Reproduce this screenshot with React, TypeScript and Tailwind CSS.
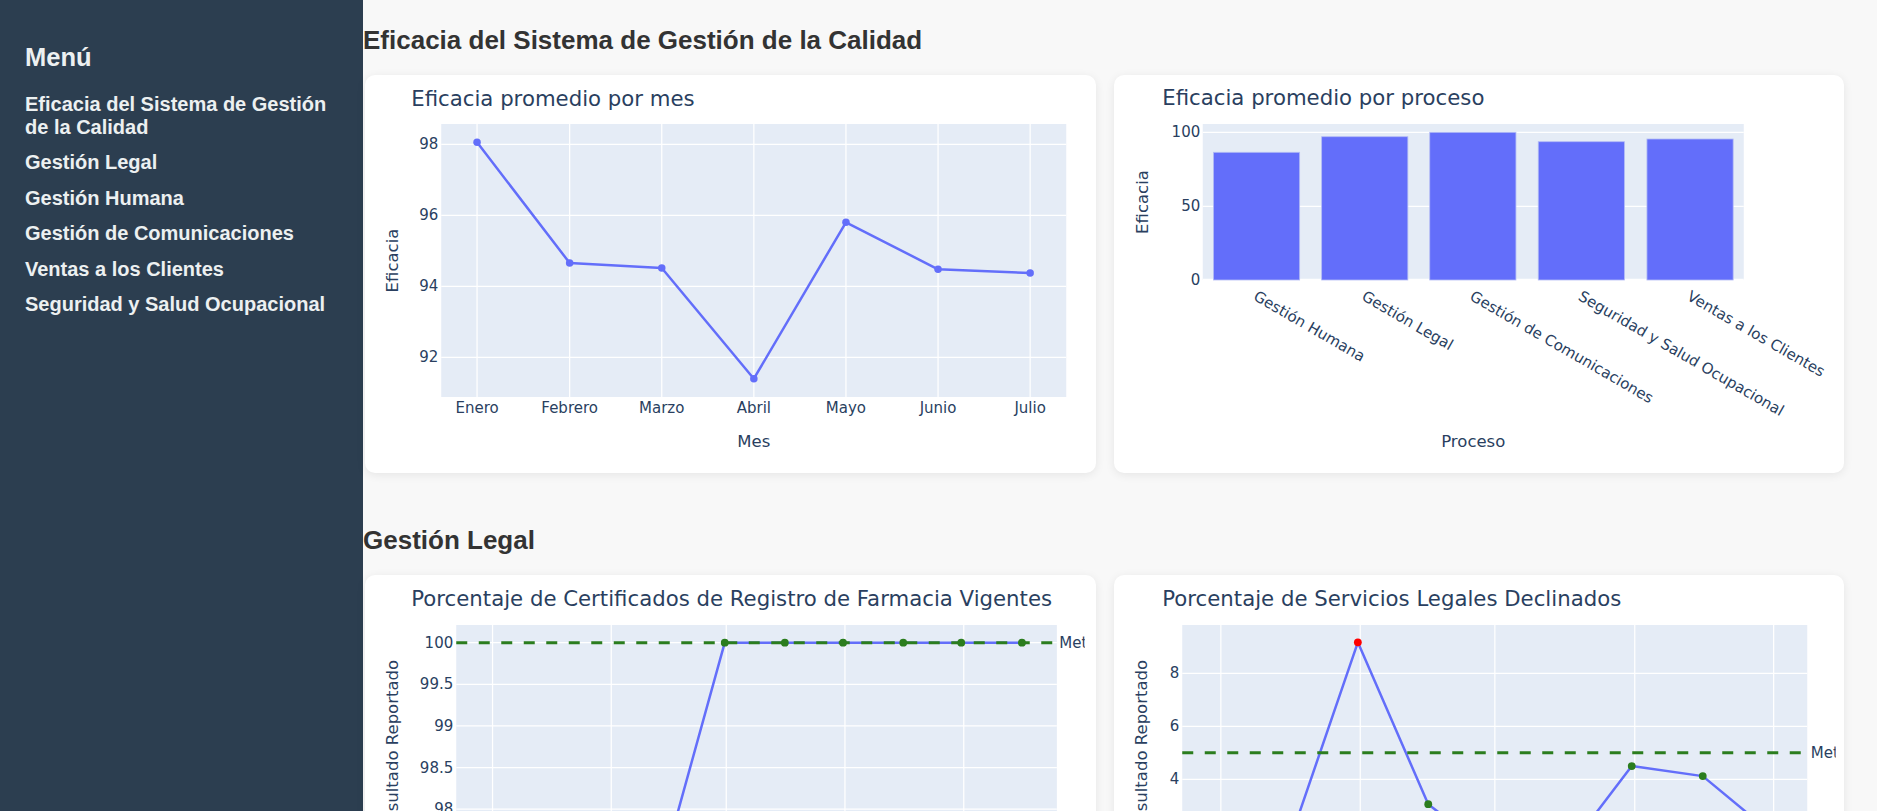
import React from "react";

const F = "'DejaVu Sans', Verdana, sans-serif";
const TXT = "#2a3f5f";
const BLUE = "#636efa";
const GREEN = "#2b7d1e";
const RED = "#ff0000";
const GRID = "#ffffff";
const AX = 16.5;

function Card({ children }: { children: React.ReactNode }) {
  return (
    <div className="bg-white rounded-[10px] shadow-[0_2px_10px_rgba(0,0,0,0.08)] overflow-hidden">
      {children}
    </div>
  );
}

function ChartEficaciaMes() {
  const xs = [111.8, 204.4, 296.5, 388.6, 480.7, 572.8, 664.9];
  const ys = [67.3, 188, 193, 303.7, 147.3, 194.3, 198];
  const months = ["Enero", "Febrero", "Marzo", "Abril", "Mayo", "Junio", "Julio"];
  const grid = [
    { y: 69.3, l: "98" },
    { y: 140.3, l: "96" },
    { y: 211.3, l: "94" },
    { y: 282.3, l: "92" },
  ];
  return (
    <svg viewBox="0 0 730 398" className="block w-full h-[398px]" fontFamily={F}>
      <text x={46} y={31} fontSize={21.25} fill={TXT}>
        Eficacia promedio por mes
      </text>
      <rect x={76} y={49} width={625} height={273} fill="#e5ecf6" />
      {grid.map((g) => (
        <line key={g.l} x1={76} x2={701} y1={g.y} y2={g.y} stroke={GRID} strokeWidth={1.25} />
      ))}
      {xs.map((x) => (
        <line key={x} x1={x} x2={x} y1={49} y2={322} stroke={GRID} strokeWidth={1.25} />
      ))}
      <polyline
        points={xs.map((x, i) => `${x},${ys[i]}`).join(" ")}
        fill="none"
        stroke={BLUE}
        strokeWidth={2.5}
        strokeLinejoin="round"
      />
      {xs.map((x, i) => (
        <circle key={x} cx={x} cy={ys[i]} r={3.75} fill={BLUE} />
      ))}
      {grid.map((g) => (
        <text key={g.l} x={73} y={g.y + 5} fontSize={15} fill={TXT} textAnchor="end">
          {g.l}
        </text>
      ))}
      {months.map((m, i) => (
        <text key={m} x={xs[i]} y={338} fontSize={15} fill={TXT} textAnchor="middle">
          {m}
        </text>
      ))}
      <text x={388.6} y={372} fontSize={AX} fill={TXT} textAnchor="middle">
        Mes
      </text>
      <text transform="translate(33,185.5) rotate(-90)" fontSize={AX} fill={TXT} textAnchor="middle">
        Eficacia
      </text>
    </svg>
  );
}

function ChartEficaciaProceso() {
  const bx = [99.2, 207.4, 315.5, 424, 532.7];
  const tops = [77.3, 61.7, 57.3, 66.7, 64];
  const labels = [
    "Gestión Humana",
    "Gestión Legal",
    "Gestión de Comunicaciones",
    "Seguridad y Salud Ocupacional",
    "Ventas a los Clientes",
  ];
  const w = 86.2;
  return (
    <svg viewBox="0 0 730 398" className="block w-full h-[398px]" fontFamily={F}>
      <text x={48} y={30} fontSize={21.25} fill={TXT}>
        Eficacia promedio por proceso
      </text>
      <rect x={88.5} y={49} width={541} height={156} fill="#e5ecf6" />
      <line x1={88.5} x2={629.5} y1={57.3} y2={57.3} stroke={GRID} strokeWidth={1.25} />
      <line x1={88.5} x2={629.5} y1={131.3} y2={131.3} stroke={GRID} strokeWidth={1.25} />
      <line x1={88.5} x2={629.5} y1={205} y2={205} stroke={GRID} strokeWidth={2.5} />
      {bx.map((x, i) => (
        <rect
          key={x}
          x={x}
          y={tops[i]}
          width={w}
          height={205 - tops[i]}
          fill={BLUE}
          stroke="#b3bcf5"
          strokeWidth={0.8}
        />
      ))}
      <text x={86} y={62.3} fontSize={15} fill={TXT} textAnchor="end">
        100
      </text>
      <text x={86} y={136.3} fontSize={15} fill={TXT} textAnchor="end">
        50
      </text>
      <text x={86} y={210} fontSize={15} fill={TXT} textAnchor="end">
        0
      </text>
      {bx.map((x, i) => (
        <text
          key={labels[i]}
          transform={`translate(${x + w / 2 - 4},224.3) rotate(30)`}
          fontSize={15}
          fill={TXT}
        >
          {labels[i]}
        </text>
      ))}
      <text x={359} y={372} fontSize={AX} fill={TXT} textAnchor="middle">
        Proceso
      </text>
      <text transform="translate(34,127) rotate(-90)" fontSize={AX} fill={TXT} textAnchor="middle">
        Eficacia
      </text>
    </svg>
  );
}

function ChartCertificados() {
  const y3 = (v: number) => 67.7 + (100 - v) * 83.2;
  const pts: [number, number][] = [
    [121.5, 97.6],
    [181, 97.5],
    [240.5, 97.55],
    [300, 97.42],
    [359.5, 100],
    [419.6, 100],
    [477.8, 100],
    [538, 100],
    [596, 100],
    [656.7, 100],
  ];
  const grid = [
    { v: 100, l: "100" },
    { v: 99.5, l: "99.5" },
    { v: 99, l: "99" },
    { v: 98.5, l: "98.5" },
    { v: 98, l: "98" },
    { v: 97.5, l: "97.5" },
  ];
  const vx = [127.3, 246, 361, 479.7, 598.5];
  return (
    <svg viewBox="0 0 730 398" className="block w-full h-[398px]" fontFamily={F}>
      <defs>
        <clipPath id="clipMeta3">
          <rect x={0} y={0} width={719.5} height={398} />
        </clipPath>
      </defs>
      <text x={46} y={31} fontSize={21.25} fill={TXT}>
        Porcentaje de Certificados de Registro de Farmacia Vigentes
      </text>
      <rect x={91} y={50} width={600.6} height={251} fill="#e5ecf6" />
      {grid.map((g) => (
        <line key={g.l} x1={91} x2={691.6} y1={y3(g.v)} y2={y3(g.v)} stroke={GRID} strokeWidth={1.25} />
      ))}
      {vx.map((x) => (
        <line key={x} x1={x} x2={x} y1={50} y2={301} stroke={GRID} strokeWidth={1.25} />
      ))}
      <polyline
        points={pts.map(([x, v]) => `${x},${y3(v)}`).join(" ")}
        fill="none"
        stroke={BLUE}
        strokeWidth={2.5}
        strokeLinejoin="round"
      />
      <line
        x1={91}
        x2={691.6}
        y1={67.7}
        y2={67.7}
        stroke={GREEN}
        strokeWidth={3}
        strokeDasharray="11 11.5"
      />
      {pts.map(([x, v]) => (
        <circle key={x} cx={x} cy={y3(v)} r={3.9} fill={v >= 100 ? GREEN : RED} />
      ))}
      {grid.map((g) => (
        <text key={g.l} x={88} y={y3(g.v) + 5} fontSize={15} fill={TXT} textAnchor="end">
          {g.l}
        </text>
      ))}
      <text x={694} y={72.7} fontSize={15} fill={TXT} clipPath="url(#clipMeta3)">
        Meta
      </text>
      <text transform="translate(33,171) rotate(-90)" fontSize={AX} fill={TXT} textAnchor="middle">
        Resultado Reportado
      </text>
    </svg>
  );
}

function ChartServicios() {
  const y4 = (v: number) => 98.3 + (8 - v) * 26.5;
  const pts: [number, number][] = [
    [103, 2.0],
    [173, 1.4],
    [243.6, 9.17],
    [314, 3.06],
    [384.5, 1.0],
    [451, 1.2],
    [517.5, 4.5],
    [588.5, 4.12],
    [659, 1.92],
  ];
  const grid = [
    { v: 8, l: "8" },
    { v: 6, l: "6" },
    { v: 4, l: "4" },
    { v: 2, l: "2" },
  ];
  const vx = [106.6, 246, 380.6, 520.5, 659.4];
  return (
    <svg viewBox="0 0 730 398" className="block w-full h-[398px]" fontFamily={F}>
      <defs>
        <clipPath id="clipMeta4">
          <rect x={0} y={0} width={721.5} height={398} />
        </clipPath>
      </defs>
      <text x={48} y={31} fontSize={21.25} fill={TXT}>
        Porcentaje de Servicios Legales Declinados
      </text>
      <rect x={68} y={50} width={625} height={251} fill="#e5ecf6" />
      {grid.map((g) => (
        <line key={g.l} x1={68} x2={693} y1={y4(g.v)} y2={y4(g.v)} stroke={GRID} strokeWidth={1.25} />
      ))}
      {vx.map((x) => (
        <line key={x} x1={x} x2={x} y1={50} y2={301} stroke={GRID} strokeWidth={1.25} />
      ))}
      <polyline
        points={pts.map(([x, v]) => `${x},${y4(v)}`).join(" ")}
        fill="none"
        stroke={BLUE}
        strokeWidth={2.5}
        strokeLinejoin="round"
      />
      <line
        x1={68}
        x2={693}
        y1={y4(5)}
        y2={y4(5)}
        stroke={GREEN}
        strokeWidth={3}
        strokeDasharray="11 11.5"
      />
      {pts.map(([x, v]) => (
        <circle key={x} cx={x} cy={y4(v)} r={3.9} fill={v > 5 ? RED : GREEN} />
      ))}
      {grid.map((g) => (
        <text key={g.l} x={65} y={y4(g.v) + 5} fontSize={15} fill={TXT} textAnchor="end">
          {g.l}
        </text>
      ))}
      <text x={696.6} y={y4(5) + 5} fontSize={15} fill={TXT} clipPath="url(#clipMeta4)">
        Meta
      </text>
      <text transform="translate(33,171) rotate(-90)" fontSize={AX} fill={TXT} textAnchor="middle">
        Resultado Reportado
      </text>
    </svg>
  );
}

const menu = [
  "Eficacia del Sistema de Gestión de la Calidad",
  "Gestión Legal",
  "Gestión Humana",
  "Gestión de Comunicaciones",
  "Ventas a los Clientes",
  "Seguridad y Salud Ocupacional",
];

export default function App() {
  return (
    <div className="flex min-h-screen font-['Liberation_Sans',Arial,sans-serif]">
      <aside className="w-[363px] shrink-0 bg-[#2c3e50] px-[25px] pt-[42px] text-[#ecf0f1]">
        <h2 className="m-0 text-[25.5px] leading-[30px] font-bold mb-[20.5px]">Menú</h2>
        <ul className="flex flex-col gap-[12.5px]">
          {menu.map((m) => (
            <li key={m} className="text-[20px] leading-[23px] font-bold">
              {m}
            </li>
          ))}
        </ul>
      </aside>
      <main className="flex-1 bg-[#f8f8f8] pl-[2px] pr-[33px] pt-[25px]">
        <section className="mb-[52px]">
          <h2 className="text-[26px] leading-[30px] font-bold text-[#333333] mb-[20px] -ml-[2px]">
            Eficacia del Sistema de Gestión de la Calidad
          </h2>
          <div className="grid grid-cols-2 gap-[18px]">
            <Card>
              <ChartEficaciaMes />
            </Card>
            <Card>
              <ChartEficaciaProceso />
            </Card>
          </div>
        </section>
        <section className="mb-[52px]">
          <h2 className="text-[26px] leading-[30px] font-bold text-[#333333] mb-[20px] -ml-[2px]">
            Gestión Legal
          </h2>
          <div className="grid grid-cols-2 gap-[18px]">
            <Card>
              <ChartCertificados />
            </Card>
            <Card>
              <ChartServicios />
            </Card>
          </div>
        </section>
      </main>
    </div>
  );
}
